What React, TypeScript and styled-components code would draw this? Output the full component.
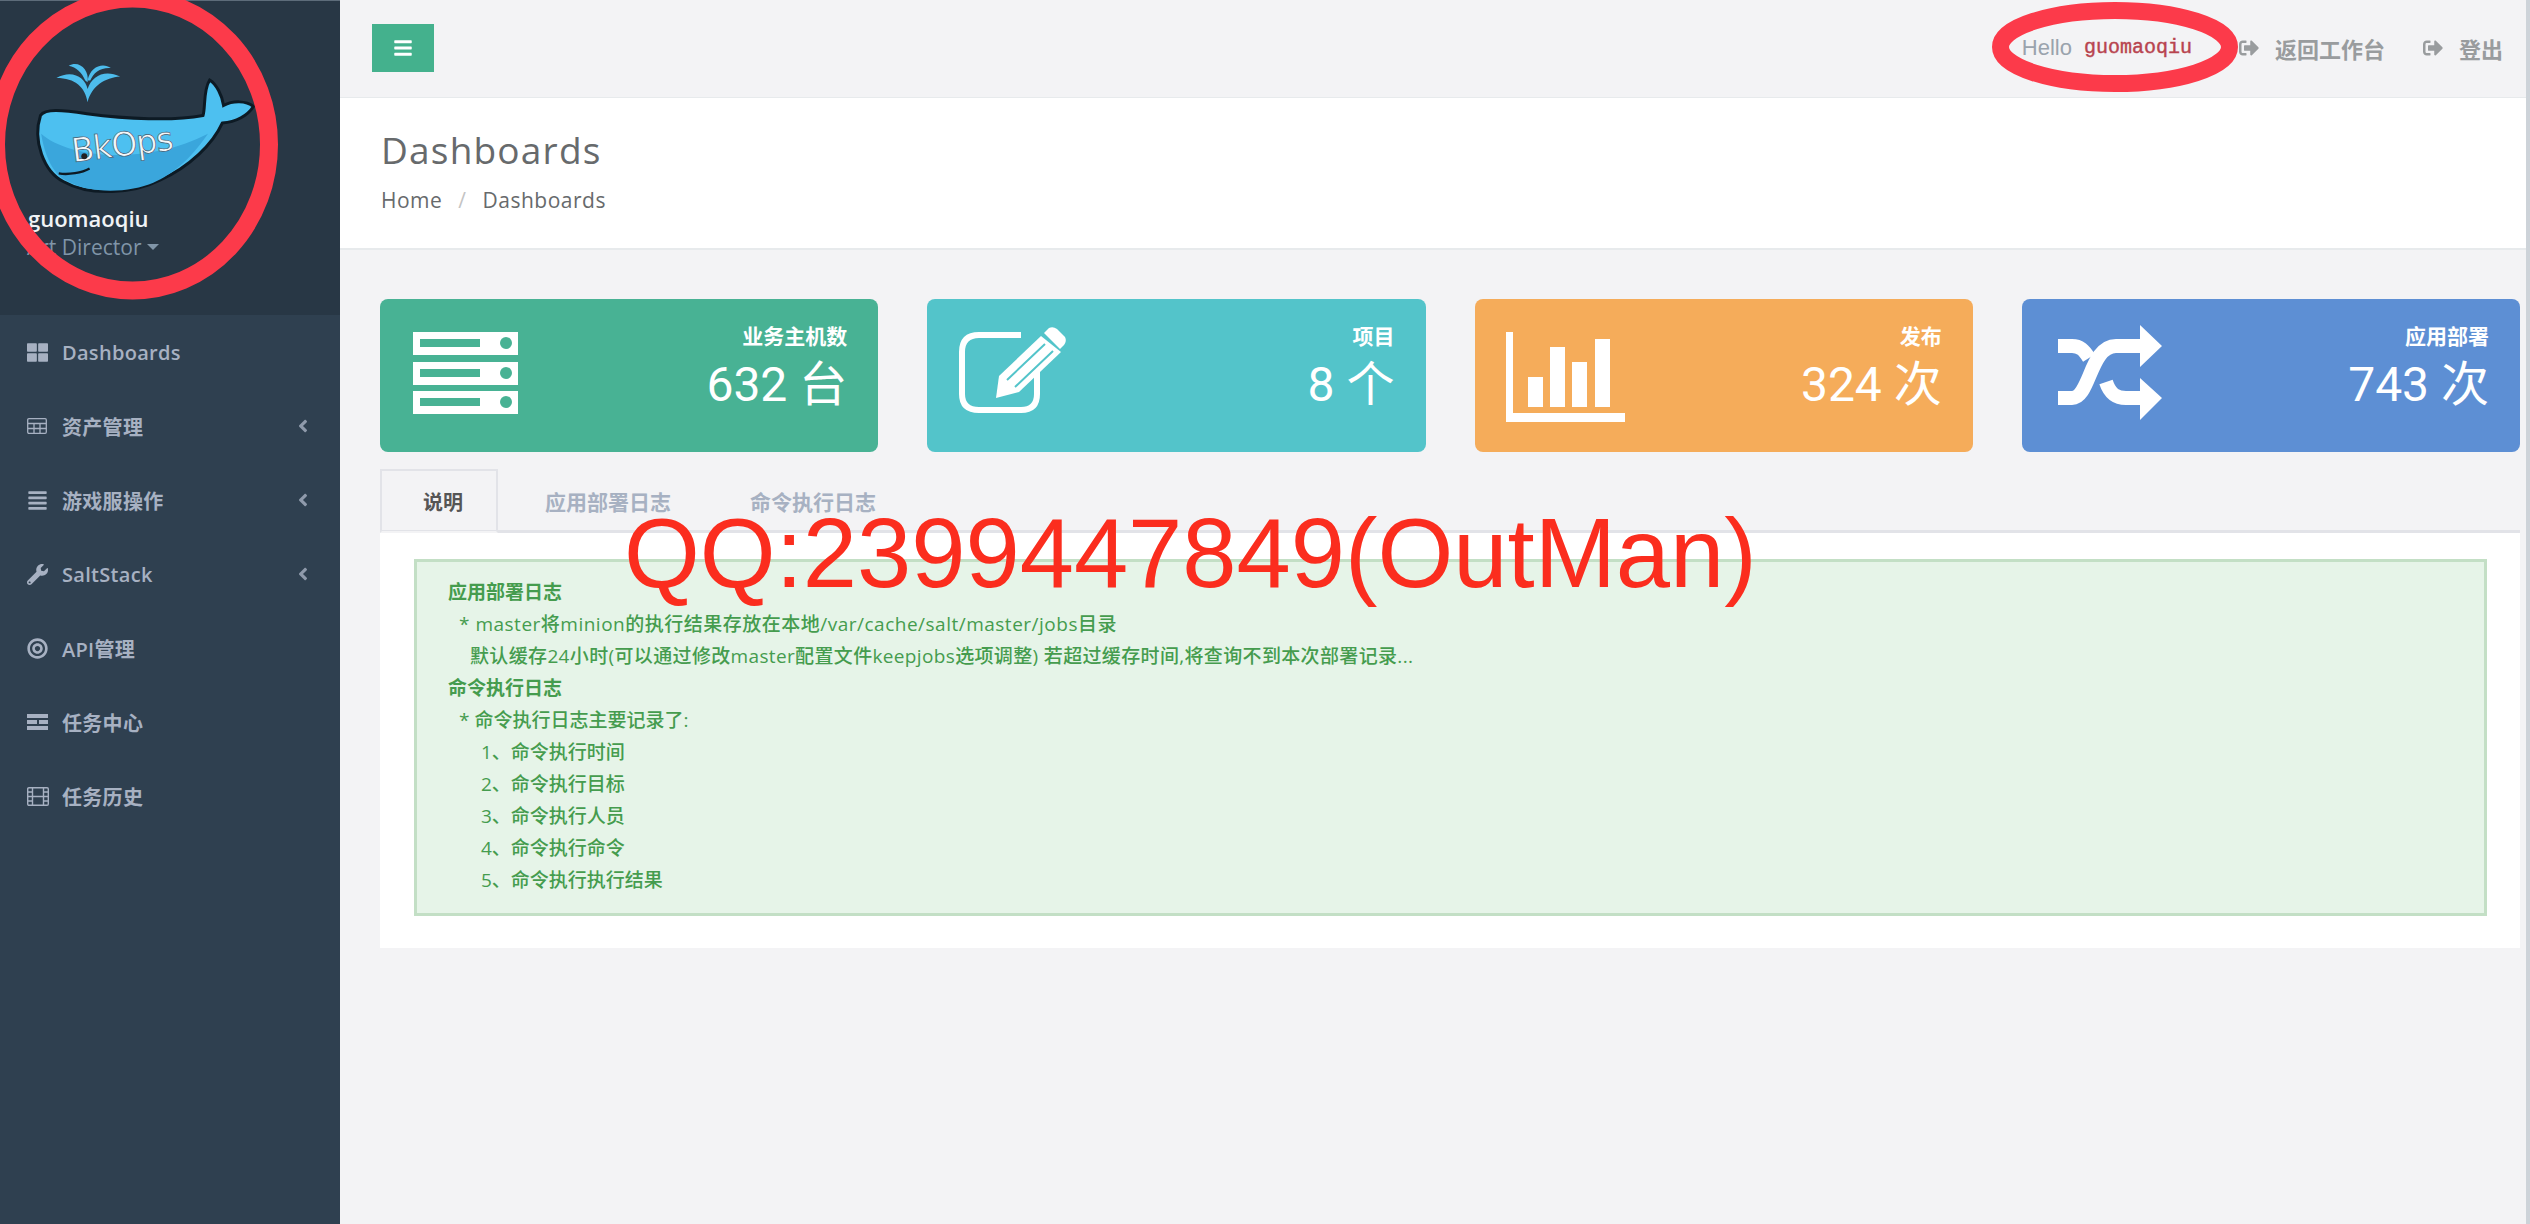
import React from 'react';
import styled, { createGlobalStyle } from 'styled-components';
import {
  FaThLarge,
  FaAlignJustify,
  FaWrench,
  FaBullseye,
  FaAngleLeft,
  FaBars,
  FaSignOutAlt,
} from 'react-icons/fa';

const SANS = '"Open Sans", "Noto Sans CJK SC", sans-serif';

const GlobalStyle = createGlobalStyle`
  html, body {
    margin: 0;
    padding: 0;
    height: 100%;
    background: #f3f3f5;
    font-family: ${SANS};
    overflow: hidden;
  }
  #root {
    height: 100%;
  }
`;

function WhaleLogo() {
  return (
    <LogoSvg viewBox="0 0 840 600">
      <g fill="#4dbcec">
        <path d="M262 305 C255 260 225 232 168 232 C215 205 255 230 262 265 C275 225 315 205 360 228 C315 232 275 255 262 305Z" />
        <path d="M255 240 C245 215 228 200 205 195 C235 178 268 205 262 245Z" />
        <path d="M270 240 C280 215 300 200 332 202 C310 185 270 195 262 240Z" />
      </g>
      <path
        d="M120 345 C135 325 180 328 260 340 C380 356 520 362 610 345 C618 320 610 270 630 238 C650 250 668 285 672 315 C700 300 740 300 762 318 C745 345 710 365 668 368 C640 430 570 500 480 540 C400 580 270 590 190 545 C130 515 95 420 120 345Z"
        fill="#4dc0f0"
        stroke="#0d1a24"
        strokeWidth="9"
      />
      <path
        d="M122 400 C200 470 430 500 625 400 C570 480 520 520 460 548 C390 578 270 585 195 540 C150 515 130 450 122 400Z"
        fill="#3aa6dc"
      />
      <path d="M175 520 C205 525 245 518 268 505" fill="none" stroke="#0d1a24" strokeWidth="7" />
      <WhaleText x="218" y="486" transform="rotate(-7 218 486)">
        BkOps
      </WhaleText>
      <circle cx="252" cy="468" r="9" fill="#222" />
    </LogoSvg>
  );
}

function TaskIcon() {
  return (
    <svg width="21" height="16" viewBox="0 0 21 16" fill="currentColor">
      <rect x="0" y="0" width="21" height="4" />
      <rect x="0" y="6" width="10" height="4" />
      <rect x="12" y="6" width="9" height="4" />
      <rect x="0" y="12" width="21" height="4" />
    </svg>
  );
}

function GridIcon() {
  return (
    <svg width="20" height="16" viewBox="0 0 20 16" fill="none" stroke="currentColor" strokeWidth="1.3">
      <rect x="0.7" y="0.7" width="18.6" height="14.6" rx="1.2" />
      <path d="M1 5.5 H19 M1 10.5 H19 M7 5 V15 M13 5 V15" />
    </svg>
  );
}

function FilmIcon() {
  return (
    <svg width="22" height="19" viewBox="0 0 22 19" fill="none" stroke="currentColor" strokeWidth="1.4">
      <rect x="0.7" y="0.7" width="20.6" height="17.6" rx="1.2" />
      <path d="M5.5 1 V18 M16.5 1 V18 M1 5 H5.5 M1 9.5 H21 M1 14 H5.5 M16.5 5 H21 M16.5 14 H21" />
    </svg>
  );
}

/* stat card drawings share one 130x100 box */
function ServerIcon() {
  return (
    <svg width="130" height="100" viewBox="0 0 130 100">
      {[10, 40, 69].map((y) => (
        <g key={y}>
          <rect x="3" y={y} width="105" height="23" fill="#fff" />
          <rect x="10" y={y + 7} width="60" height="8" fill="#48b294" />
          <circle cx="96" cy={y + 11} r="6" fill="#48b294" />
        </g>
      ))}
    </svg>
  );
}

function EditIcon() {
  return (
    <svg width="130" height="100" viewBox="0 0 130 100">
      <path
        d="M64 13 H22 Q5 13 5 30 V72 Q5 88 22 88 H64 Q80 88 80 72 V48"
        fill="none"
        stroke="#fff"
        strokeWidth="6"
      />
      <path d="M39 76 L42 54 L84 14 L104 30 L62 70Z" fill="#fff" />
      <path d="M50 58 L88 22 M58 65 L96 29" stroke="#53c4ca" strokeWidth="2" />
      <path d="M87 11 L92 6 Q96 4 100 7 L108 15 Q110 19 107 23 L103 27Z" fill="#fff" />
    </svg>
  );
}

function BarChartIcon() {
  return (
    <svg width="130" height="104" viewBox="0 0 130 104" fill="#fff">
      <rect x="1" y="10" width="7" height="90" />
      <rect x="1" y="91" width="119" height="9" />
      <rect x="23" y="55" width="15" height="30" />
      <rect x="45" y="25" width="15" height="60" />
      <rect x="67" y="40" width="15" height="45" />
      <rect x="90" y="17" width="15" height="68" />
    </svg>
  );
}

function ShuffleIcon() {
  return (
    <svg width="130" height="100" viewBox="-3 0 130 100">
      <g fill="none" stroke="#fff" strokeWidth="14">
        <path d="M3 24 H17 C25 24 29 28 34 36" />
        <path d="M3 76 H17 C35 76 35 24 61 24 H86" />
        <path d="M51 60 C55 72 61 76 71 76 H86" />
      </g>
      <path d="M85 3 L107 24 L85 45Z M85 56 L107 76 L85 98Z" fill="#fff" />
    </svg>
  );
}

const navItems = [
  { icon: <FaThLarge />, label: 'Dashboards' },
  { icon: <GridIcon />, label: '资产管理', sub: true },
  { icon: <FaAlignJustify />, label: '游戏服操作', sub: true },
  { icon: <FaWrench />, label: 'SaltStack', sub: true },
  { icon: <FaBullseye />, label: 'API管理' },
  { icon: <TaskIcon />, label: '任务中心' },
  { icon: <FilmIcon />, label: '任务历史' },
];

const stats = [
  { color: '#48b294', icon: <ServerIcon />, title: '业务主机数', value: '632 台' },
  { color: '#53c4ca', icon: <EditIcon />, title: '项目', value: '8 个' },
  { color: '#f5ac5a', icon: <BarChartIcon />, title: '发布', value: '324 次' },
  { color: '#5d8fd4', icon: <ShuffleIcon />, title: '应用部署', value: '743 次' },
];

const notes: { text: string; indent: number; strong?: boolean; spacing?: number }[] = [
  { text: '应用部署日志', indent: 0, strong: true },
  { text: '* master将minion的执行结果存放在本地/var/cache/salt/master/jobs目录', indent: 11, spacing: 0.5 },
  {
    text: '默认缓存24小时(可以通过修改master配置文件keepjobs选项调整) 若超过缓存时间,将查询不到本次部署记录...',
    indent: 22,
    spacing: 0.35,
  },
  { text: '命令执行日志', indent: 0, strong: true },
  { text: '* 命令执行日志主要记录了:', indent: 11 },
  { text: '1、命令执行时间', indent: 33 },
  { text: '2、命令执行目标', indent: 33 },
  { text: '3、命令执行人员', indent: 33 },
  { text: '4、命令执行命令', indent: 33 },
  { text: '5、命令执行执行结果', indent: 33 },
];

export default function App() {
  return (
    <Page>
      <GlobalStyle />
      <Sidebar>
        <Profile>
          <WhaleLogo />
          <UserName>guomaoqiu</UserName>
          <UserRole>
            Art Director <Caret />
          </UserRole>
        </Profile>
        <nav>
          {navItems.map((item) => (
            <NavItem key={item.label}>
              <NavIcon>{item.icon}</NavIcon>
              <span>{item.label}</span>
              {item.sub && (
                <NavArrow>
                  <FaAngleLeft />
                </NavArrow>
              )}
            </NavItem>
          ))}
        </nav>
        <ProfileRing viewBox="0 0 300 310">
          <ellipse cx="132.5" cy="144.5" rx="136.5" ry="146" />
        </ProfileRing>
      </Sidebar>

      <Main>
        <TopBar>
          <ToggleButton>
            <FaBars />
          </ToggleButton>
          <TopLinks>
            <Hello>Hello</Hello>
            <HelloName>guomaoqiu</HelloName>
            <TopLink $gap={47}>
              <FaSignOutAlt />
              返回工作台
            </TopLink>
            <TopLink $gap={38}>
              <FaSignOutAlt />
              登出
            </TopLink>
          </TopLinks>
          <HelloRing viewBox="0 0 248 92">
            <ellipse cx="123" cy="47" rx="114.5" ry="36.5" />
          </HelloRing>
        </TopBar>

        <Heading>
          <HeadingTitle>Dashboards</HeadingTitle>
          <Breadcrumb>
            <span>Home</span>
            <Slash>/</Slash>
            <span>Dashboards</span>
          </Breadcrumb>
        </Heading>

        <Content>
          <StatGrid>
            {stats.map((s) => (
              <StatCard key={s.title} $color={s.color}>
                {s.icon}
                <StatText>
                  <StatTitle>{s.title}</StatTitle>
                  <StatValue>{s.value}</StatValue>
                </StatText>
              </StatCard>
            ))}
          </StatGrid>

          <Tabs>
            <Tab $active>说明</Tab>
            <Tab>应用部署日志</Tab>
            <Tab>命令执行日志</Tab>
          </Tabs>
          <TabPanel>
            <Notice>
              {notes.map((n) => (
                <NoticeLine key={n.text} $indent={n.indent} $strong={n.strong} $spacing={n.spacing}>
                  {n.text}
                </NoticeLine>
              ))}
            </Notice>
          </TabPanel>
          <Watermark>QQ:2399447849(OutMan)</Watermark>
        </Content>
      </Main>
      <EdgeStrip />
    </Page>
  );
}

const Page = styled.div`
  display: flex;
  width: 2530px;
  height: 1224px;
  overflow: hidden;
`;

const Sidebar = styled.aside`
  position: relative;
  flex: 0 0 340px;
  background: #2f4050;
  overflow: hidden;
`;

const Profile = styled.div`
  height: 315px;
  box-sizing: border-box;
  background: #283745;
  border-top: 1px solid #5d6c7a;
`;

const LogoSvg = styled.svg`
  display: block;
  width: 280px;
  height: 199px;
`;

const WhaleText = styled.text`
  font-family: 'DejaVu Sans', sans-serif;
  font-size: 100px;
  letter-spacing: -3px;
  fill: #f4f7f9;
  stroke: #3e5a70;
  stroke-width: 2px;
`;

const UserName = styled.div`
  margin: 3px 0 0 28px;
  font-size: 22px;
  line-height: 30px;
  font-weight: 600;
  color: #f0f3f6;
`;

const UserRole = styled.div`
  display: flex;
  align-items: center;
  gap: 6px;
  margin: 0 0 0 27px;
  font-size: 21px;
  line-height: 28px;
  color: #8095a8;
`;

const Caret = styled.i`
  width: 0;
  height: 0;
  border-left: 6px solid transparent;
  border-right: 6px solid transparent;
  border-top: 6px solid #8095a8;
`;

const NavItem = styled.div`
  display: flex;
  align-items: center;
  height: 74px;
  padding: 0 27px;
  font-size: 20px;
  font-weight: 600;
  letter-spacing: 0.3px;
  color: #a7b1c2;
`;

const NavIcon = styled.span`
  display: flex;
  flex: 0 0 35px;
  align-items: center;
  font-size: 21px;
`;

const NavArrow = styled.span`
  display: flex;
  margin-left: auto;
  font-size: 20px;
  opacity: 0.8;
`;

const ProfileRing = styled.svg`
  position: absolute;
  top: 0;
  left: 0;
  width: 300px;
  height: 310px;
  overflow: visible;
  fill: none;
  stroke: #fc3a4a;
  stroke-width: 18;
`;

const Main = styled.main`
  display: flex;
  flex: 1;
  flex-direction: column;
  min-width: 0;
`;

const TopBar = styled.header`
  position: relative;
  display: flex;
  align-items: center;
  justify-content: space-between;
  height: 98px;
  box-sizing: border-box;
  padding: 0 23px 2px 32px;
  border-bottom: 1px solid #e7eaec;
`;

const ToggleButton = styled.button`
  display: flex;
  align-items: center;
  justify-content: center;
  width: 62px;
  height: 48px;
  padding: 0;
  border: 0;
  background: #44b18d;
  color: #fff;
  font-size: 20px;
`;

const TopLinks = styled.div`
  display: flex;
  align-items: center;
`;

const Hello = styled.span`
  font-family: 'Liberation Sans', sans-serif;
  font-size: 22px;
  color: #9aa3ad;
`;

const HelloName = styled.code`
  margin-left: 12px;
  font-family: 'Liberation Mono', monospace;
  font-size: 20px;
  color: #b8444f;
  -webkit-text-stroke: 0.4px #b8444f;
`;

const TopLink = styled.span<{ $gap: number }>`
  display: flex;
  align-items: center;
  gap: 16px;
  margin-left: ${(p) => p.$gap}px;
  font-size: 22px;
  font-weight: 700;
  color: #999c9e;

  svg {
    font-size: 20px;
  }
`;

const HelloRing = styled.svg`
  position: absolute;
  top: 0;
  left: 1652px;
  width: 248px;
  height: 92px;
  overflow: visible;
  fill: none;
  stroke: #fc3a4a;
  stroke-width: 17;
`;

const Heading = styled.section`
  display: flex;
  flex-direction: column;
  justify-content: center;
  height: 152px;
  box-sizing: border-box;
  padding: 0 0 4px 41px;
  background: #fff;
  border-bottom: 2px solid #e7eaec;
`;

const HeadingTitle = styled.h2`
  margin: 0 0 14px;
  font-size: 37px;
  line-height: 44px;
  font-weight: 400;
  letter-spacing: 1.2px;
  color: #676a6c;
`;

const Breadcrumb = styled.div`
  display: flex;
  gap: 16px;
  font-size: 21px;
  line-height: 28px;
  letter-spacing: 0.5px;
  color: #676a6c;
`;

const Slash = styled.span`
  color: #c4c4c4;
`;

const Content = styled.div`
  position: relative;
  flex: 1;
  padding: 49px 6px 0 40px;
`;

const StatGrid = styled.div`
  display: grid;
  grid-template-columns: repeat(4, 1fr);
  gap: 49px;
`;

const StatCard = styled.div<{ $color: string }>`
  display: flex;
  align-items: flex-start;
  justify-content: space-between;
  height: 153px;
  box-sizing: border-box;
  padding: 23px 31px 0 30px;
  border-radius: 8px;
  background: ${(p) => p.$color};
  color: #fff;
`;

const StatText = styled.div`
  text-align: right;
`;

const StatTitle = styled.div`
  font-size: 21px;
  line-height: 28px;
  font-weight: 700;
`;

const StatValue = styled.div`
  margin-top: 4px;
  font-family: Roboto, 'Noto Sans CJK SC', sans-serif;
  font-size: 48px;
  line-height: 62px;
  font-weight: 400;
`;

const Tabs = styled.div`
  display: flex;
  align-items: flex-end;
  height: 65px;
  margin-top: 16px;
  box-sizing: border-box;
  border-bottom: 3px solid #e2e3e8;
`;

const Tab = styled.div<{ $active?: boolean }>`
  display: flex;
  align-items: center;
  height: 64px;
  margin-bottom: -3px;
  box-sizing: border-box;
  padding: ${(p) => (p.$active ? '0 33px 0 41px' : '0 32px 0 47px')};
  font-size: ${(p) => (p.$active ? 20 : 21)}px;
  font-weight: 700;
  color: ${(p) => (p.$active ? '#555' : '#a7b1c2')};
  ${(p) =>
    p.$active &&
    `
    border: 2px solid #e2e3e8;
    border-bottom-color: #f3f3f5;
  `}
`;

const TabPanel = styled.div`
  padding: 26px 33px 32px 34px;
  background: #fff;
`;

const Notice = styled.div`
  padding: 14px 31px 17px;
  border: 3px solid #c3dfc5;
  background: #e6f4e8;
`;

const NoticeLine = styled.div<{ $indent: number; $strong?: boolean; $spacing?: number }>`
  padding-left: ${(p) => p.$indent}px;
  font-size: 19px;
  line-height: 32px;
  font-weight: ${(p) => (p.$strong ? 700 : 500)};
  letter-spacing: ${(p) => p.$spacing ?? 0}px;
  color: #459c4e;
`;

const Watermark = styled.div`
  position: absolute;
  top: 255px;
  left: 284px;
  font-family: 'Liberation Sans', sans-serif;
  font-size: 97.5px;
  line-height: 1;
  white-space: nowrap;
  color: #fb2d1e;
`;

const EdgeStrip = styled.div`
  flex: 0 0 4px;
  background: #cdd3d9;
`;
